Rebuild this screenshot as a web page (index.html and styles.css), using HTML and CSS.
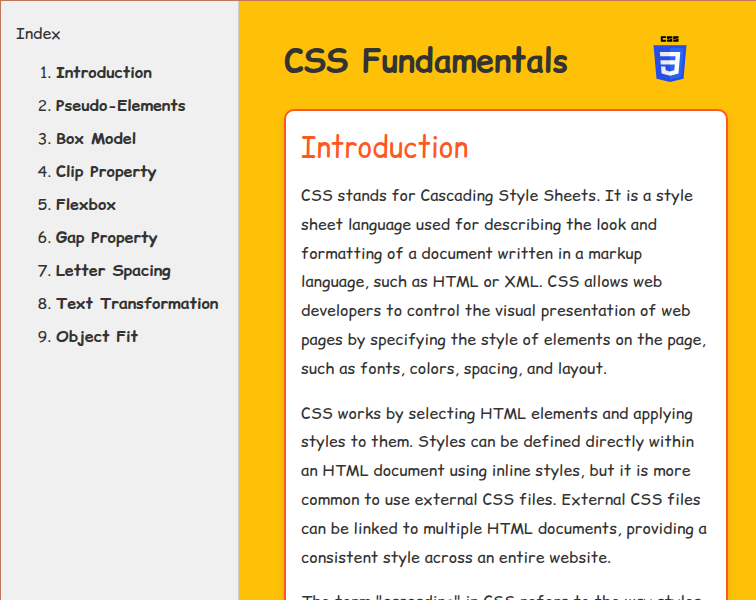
FILE: index.html
```html
<!DOCTYPE html>
<html lang="en">
<head>
<meta charset="utf-8">
<title>CSS Fundamentals</title>
<link rel="stylesheet" href="styles.css">
</head>
<body>
<div class="page">
  <nav class="sidebar">
    <div class="sidebar-title">Index</div>
    <ol class="index-list">
      <li><a>Introduction</a></li>
      <li><a>Pseudo-Elements</a></li>
      <li><a>Box Model</a></li>
      <li><a>Clip Property</a></li>
      <li><a>Flexbox</a></li>
      <li><a>Gap Property</a></li>
      <li><a>Letter Spacing</a></li>
      <li><a>Text Transformation</a></li>
      <li><a>Object Fit</a></li>
    </ol>
  </nav>
  <main class="content">
    <header class="header">
      <h1>CSS Fundamentals</h1>
      <svg class="logo" viewBox="0 0 34 46" aria-hidden="true">
        <path d="M7.800 .2h5.300v1.900H9.800v1.700h3.300v1.900H7.800zM14 .2h5.300v1.700h-3v.5h3v3.300H14V4h3.200v-.5H14zM20.200 .2h5.300v1.700h-3v.5h3v3.300h-5.300V4h3.200v-.5h-3.200z" fill="#000"/>
        <path d="M.5 9.200h33L30.500 42.700 17 46 3.500 42.700z" fill="#264de4"/>
        <path d="M17 11.700h13.800L28.200 40.500 17 43.500z" fill="#2965f1"/>
        <path d="M6.800 16h10.200v4.300H7.200zM7.400 24.200H17v4.300H7.800zM8 30.500h4.300l.4 3.700 4.300 1.200v4.400l-8.400-2.400z" fill="#ebebeb"/>
        <path d="M17 16h10.300L25.500 37.400 17 39.800v-4.400l4.300-1.200.5-5.700H17v-4.300h5.200l.3-3.900H17z" fill="#fff"/>
      </svg>
    </header>
    <section class="card">
      <h2>Introduction</h2>
      <p>CSS stands for Cascading Style Sheets. It is a style sheet language used for describing the look and formatting of a document written in a markup language, such as HTML or XML. CSS allows web developers to control the visual presentation of web pages by specifying the style of elements on the page, such as fonts, colors, spacing, and layout.</p>
      <p>CSS works by selecting HTML elements and applying styles to them. Styles can be defined directly within an HTML document using inline styles, but it is more common to use external CSS files. External CSS files can be linked to multiple HTML documents, providing a consistent style across an entire website.</p>
      <p>The term "cascading" in CSS refers to the way styles</p>
    </section>
  </main>
</div>
</body>
</html>
```
FILE: styles.css
```css
* { box-sizing: border-box; }
body {
  margin: 0;
  font: 16px "Comic Relief", "Comic Sans MS", cursive;
  color: #333;
}
.page {
  display: flex;
  height: 600px;
  overflow: hidden;
  background: #ffc107;
  border: solid #bf7556;
  border-width: 1px 0 0 1px;
}
.sidebar {
  width: 238px;
  flex: none;
  padding: 21px 15px;
  background: #f0f0f0;
  border-right: 1px solid #ccc;
}
.sidebar-title { line-height: 23px; }
.index-list {
  margin: 16px 0 0;
  padding: 0 0 0 40px;
}
.index-list li { height: 23px; line-height: 23px; margin-bottom: 10px; }
.index-list a { font-weight: 700; }
.content { flex: 1; padding: 20px 28px 0 45px; }
.header {
  display: flex;
  justify-content: space-between;
  align-items: center;
  height: 76px;
  padding-right: 41px;
}
h1 { margin: 4px 0 0; font-size: 32px; line-height: 48px; }
.logo { width: 34px; height: 46px; }
.card {
  height: 900px;
  margin-top: 12px;
  padding: 14px 15px;
  background: #fff;
  border: 2px solid #ff5722;
  border-radius: 10px;
  box-shadow: 0 4px 8px rgba(0, 0, 0, .1);
}
h2 {
  margin: 0 0 12px;
  color: #ff5722;
  font-size: 28px;
  font-weight: 400;
  line-height: 44px;
}
p { margin: 0 0 16px; line-height: 28.800px; }
```
